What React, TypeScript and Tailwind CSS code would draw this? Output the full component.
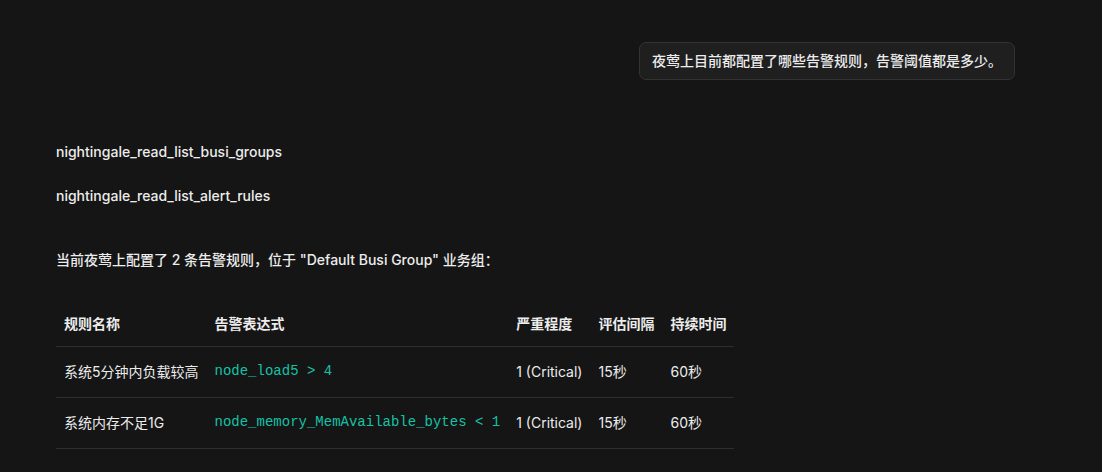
const rules = [
  { name: "系统5分钟内负载较高", expr: "node_load5 > 4", severity: "1 (Critical)", interval: "15秒", duration: "60秒" },
  { name: "系统内存不足1G", expr: "node_memory_MemAvailable_bytes < 1", severity: "1 (Critical)", interval: "15秒", duration: "60秒" },
];

const sans = "font-['Inter','Noto_Sans_CJK_SC',sans-serif]";

export default function App() {
  return (
    <div className={`min-h-[472px] w-full bg-[#151515] text-[#ececec] ${sans} text-[14px] font-medium`}>
      <div className="flex justify-end pr-[87px] pt-[42px]">
        <div className="rounded-[7px] border border-[#333333] bg-[#1f1f1f] px-[12px] py-[8px] leading-[20px]">
          夜莺上目前都配置了哪些告警规则，告警阈值都是多少。
        </div>
      </div>

      <div className="px-[56px] pt-[62px]">
        <p className="leading-[20px]">nightingale_read_list_busi_groups</p>
        <p className="mt-[24px] leading-[20px]">nightingale_read_list_alert_rules</p>
        <p className="mt-[44px] leading-[20px]">当前夜莺上配置了 2 条告警规则，位于 "Default Busi Group" 业务组：</p>

        <table className="mt-[31px] border-collapse text-left">
          <thead>
            <tr className="border-b border-[#2e2e2e]">
              <th className="h-[45px] px-[8px] font-semibold">规则名称</th>
              <th className="h-[45px] px-[8px] font-semibold">告警表达式</th>
              <th className="h-[45px] px-[8px] font-semibold">严重程度</th>
              <th className="h-[45px] px-[8px] font-semibold">评估间隔</th>
              <th className="h-[45px] px-[8px] font-semibold">持续时间</th>
            </tr>
          </thead>
          <tbody className="font-normal">
            {rules.map((r) => (
              <tr key={r.name} className="border-b border-[#2e2e2e]">
                <td className="h-[51px] px-[8px]">{r.name}</td>
                <td className="h-[51px] px-[8px] font-['Liberation_Mono',monospace] text-[#16c2a6]">{r.expr}</td>
                <td className="h-[51px] px-[8px]">{r.severity}</td>
                <td className="h-[51px] px-[8px]">{r.interval}</td>
                <td className="h-[51px] px-[8px]">{r.duration}</td>
              </tr>
            ))}
          </tbody>
        </table>
      </div>
    </div>
  );
}
